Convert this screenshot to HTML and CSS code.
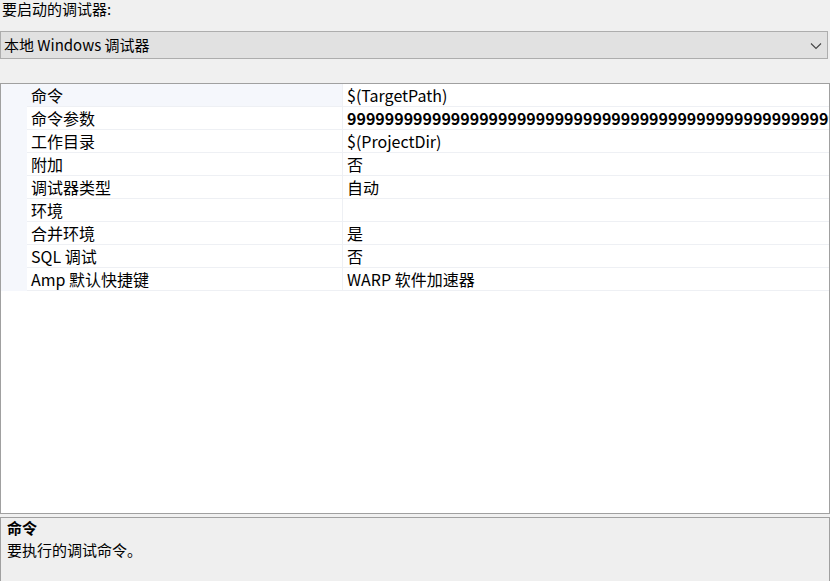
FILE: index.html
```html
<!DOCTYPE html>
<html lang="zh-CN">
<head>
<meta charset="utf-8">
<title>调试</title>
<link rel="stylesheet" href="styles.css">
</head>
<body>
<div class="page">
  <div class="top-label">要启动的调试器:</div>
  <div class="combo">
    <span class="combo-text">本地 Windows 调试器</span>
    <svg class="chev" width="12" height="8" viewBox="0 0 12 8"><polyline points="1,1.5 6,6.5 11,1.5" fill="none" stroke="#444" stroke-width="1.1"/></svg>
  </div>
  <div class="grid">
    <div class="row selected"><div class="margin"></div><div class="name">命令</div><div class="value">$(TargetPath)</div></div>
    <div class="row"><div class="margin"></div><div class="name">命令参数</div><div class="value bold">9999999999999999999999999999999999999999999999999999999999999999999999</div></div>
    <div class="row"><div class="margin"></div><div class="name">工作目录</div><div class="value">$(ProjectDir)</div></div>
    <div class="row"><div class="margin"></div><div class="name">附加</div><div class="value">否</div></div>
    <div class="row"><div class="margin"></div><div class="name">调试器类型</div><div class="value">自动</div></div>
    <div class="row"><div class="margin"></div><div class="name">环境</div><div class="value"></div></div>
    <div class="row"><div class="margin"></div><div class="name">合并环境</div><div class="value">是</div></div>
    <div class="row"><div class="margin"></div><div class="name">SQL 调试</div><div class="value">否</div></div>
    <div class="row"><div class="margin"></div><div class="name">Amp 默认快捷键</div><div class="value">WARP 软件加速器</div></div>
  </div>
  <div class="desc">
    <div class="desc-title">命令</div>
    <div class="desc-text">要执行的调试命令。</div>
  </div>
</div>
</body>
</html>
```
FILE: styles.css
```css
html, body {
  margin: 0;
  padding: 0;
  background: #f0f0f0;
}
body {
  font-family: "Noto Sans CJK SC", "Noto Sans", sans-serif;
  font-size: 15px;
  color: #000;
  width: 830px;
  height: 581px;
  overflow: hidden;
}
.page {
  display: flex;
  flex-direction: column;
  height: 581px;
}
.top-label {
  height: 31px;
  line-height: 18px;
  padding-left: 2px;
  box-sizing: border-box;
  white-space: nowrap;
}
.combo {
  height: 28px;
  width: 828px;
  box-sizing: border-box;
  border: 1px solid #adadad;
  background: #e1e1e1;
  display: flex;
  align-items: center;
  justify-content: space-between;
  padding: 0 5px 0 3px;
}
.combo-text {
  line-height: 18px;
  white-space: nowrap;
}
.chev {
  display: block;
  margin-top: 1px;
}
.grid {
  margin-top: 24px;
  height: 431px;
  box-sizing: border-box;
  border: 1px solid #a0a0a0;
  background: #fff;
  overflow: hidden;
  flex: none;
  font-size: 16px;
}
.row {
  display: flex;
  height: 23px;
  box-sizing: border-box;
  border-bottom: 1px solid #eef0f4;
}
.margin {
  width: 26px;
  flex: none;
  background: #f5f7fc;
  margin-bottom: -1px;
}
.name {
  width: 316px;
  flex: none;
  padding-left: 4px;
  box-sizing: border-box;
  border-right: 1px solid #eef0f4;
  line-height: 22px;
  white-space: nowrap;
}
.row.selected .name {
  background: #f5f7fc;
}
.value {
  flex: 1;
  padding-left: 4px;
  line-height: 22px;
  white-space: nowrap;
  overflow: hidden;
}
.value.bold {
  font-weight: bold;
}
.desc {
  margin-top: 3px;
  flex: 1;
  box-sizing: border-box;
  border: 1px solid #a0a0a0;
  border-bottom: none;
  background: #efefef;
  padding: 0 6px;
}
.desc-title {
  font-weight: bold;
  line-height: 20px;
}
.desc-text {
  line-height: 23px;
}
```
